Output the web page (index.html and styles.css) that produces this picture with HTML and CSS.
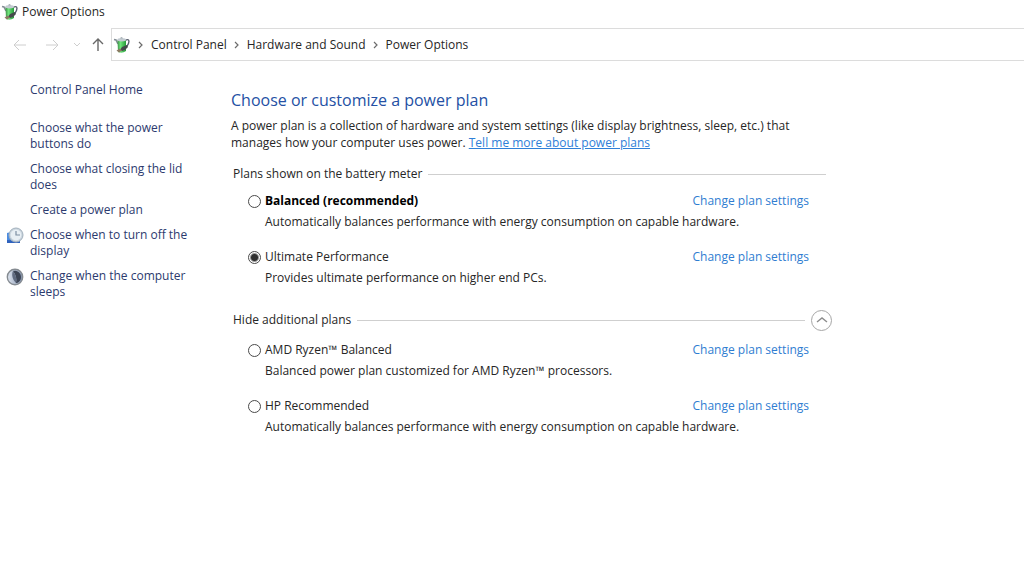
FILE: index.html
```html
<!DOCTYPE html>
<html lang="en">
<head>
<meta charset="utf-8">
<title>Power Options</title>
<link rel="stylesheet" href="styles.css">
</head>
<body>
<svg class="sprite" aria-hidden="true">
  <defs>
    <linearGradient id="green" x1="0" x2="1"><stop offset="0" stop-color="#3d8f47"/><stop offset=".35" stop-color="#6ee47a"/><stop offset="1" stop-color="#249a38"/></linearGradient>
    <linearGradient id="moon" x1="0" x2="1"><stop offset="0" stop-color="#dfe6f0"/><stop offset="1" stop-color="#8190ac"/></linearGradient>
  </defs>
  <symbol id="battery" viewBox="0 0 18 18">
    <path d="M1 3.5l2 .5 2 4" fill="none" stroke="#838d94" stroke-width="1.6"/>
    <path d="M12 4.500c4-2 4.500 0 3.500 3s-2 3-3.500 3.500" fill="none" stroke="#59606f" stroke-width="1.4"/>
    <path d="M4.500 4h8.500v11q-4 3-8 1z" fill="url(#green)"/>
    <ellipse cx="8.700" cy="3.700" rx="4.400" ry="1.700" fill="#c3cbd1"/>
    <path d="M7 2.200q1.500-1.800 3 0z" fill="#8c979d"/>
    <path d="M7 14l2-3 5-2 1 2-3 3-3 1z" fill="#444a4b"/>
    <path d="M3.500 14.500l3.500-2 2 2-3 2z" fill="#8b7a62"/>
  </symbol>
</svg>
<header>
  <div class="titlebar"><svg class="app-icon" aria-hidden="true"><use href="#battery"/></svg><span>Power Options</span></div>
  <nav class="toolbar" aria-label="Navigation">
    <div class="history">
      <button class="nav-button" aria-label="Back" disabled><svg width="14" height="12" viewBox="0 0 14 12"><path d="M13 6H1m5-5L1 6l5 5"/></svg></button>
      <button class="nav-button" aria-label="Forward" disabled><svg width="14" height="12" viewBox="0 0 14 12"><path d="M1 6h12M8 1l5 5-5 5"/></svg></button>
      <button class="nav-button recent" aria-label="Recent locations" disabled><svg width="8" height="6" viewBox="0 0 8 6"><path d="M1 1l3 3 3-3"/></svg></button>
      <button class="nav-button up" aria-label="Up"><svg width="12" height="14" viewBox="0 0 12 14"><path d="M6 13V1M1 6l5-5 5 5"/></svg></button>
    </div>
    <div class="address">
      <svg class="app-icon" aria-hidden="true"><use href="#battery"/></svg>
      <svg class="chevron" viewBox="0 0 6 8"><path d="M1 1l3 3-3 3"/></svg>
      <a href="#">Control Panel</a>
      <svg class="chevron" viewBox="0 0 6 8"><path d="M1 1l3 3-3 3"/></svg>
      <a href="#">Hardware and Sound</a>
      <svg class="chevron" viewBox="0 0 6 8"><path d="M1 1l3 3-3 3"/></svg>
      <a href="#">Power Options</a>
    </div>
  </nav>
</header>
<div class="page">
  <aside class="sidebar">
    <a class="home" href="#">Control Panel Home</a>
    <ul class="tasks">
      <li><a href="#">Choose what the power buttons do</a></li>
      <li><a href="#">Choose what closing the lid does</a></li>
      <li><a href="#">Create a power plan</a></li>
      <li>
        <svg class="task-icon" viewBox="0 0 18 18" aria-hidden="true"><path d="M1 6l4-1 9 8v3H1z" fill="#4b8be0"/><path d="M1 13l13 1v2H1z" fill="#2f62bd"/><circle cx="10" cy="8" r="7" fill="#c9d4dd" stroke="#a3b1bd"/><circle cx="10" cy="8" r="5.400" fill="#e8eff4"/><path d="M10 4v4h4" fill="none" stroke="#7d8fa2" stroke-width="1.200"/></svg>
        <a href="#">Choose when to turn off the display</a>
      </li>
      <li>
        <svg class="task-icon" viewBox="0 0 18 18" aria-hidden="true"><circle cx="9" cy="9" r="7.700" fill="url(#moon)" stroke="#858b91" stroke-width="1.400"/><path d="M7 3c4-1 8 2 8 6s-3 6-5 6c1-4 0-8-3-12z" fill="#3c4454"/><path d="M7 3c-2 4 0 9 3 12 1-4 0-8-3-12z" fill="#606b80"/></svg>
        <a href="#">Change when the computer sleeps</a>
      </li>
    </ul>
  </aside>
  <main class="content">
    <h1>Choose or customize a power plan</h1>
    <p class="intro">A power plan is a collection of hardware and system settings (like display brightness, sleep, etc.) that manages how your computer uses power. <a href="#">Tell me more about power plans</a></p>
    <section class="group">
      <div class="group-head"><h2>Plans shown on the battery meter</h2></div>
      <div class="plans">
        <div class="plan">
          <input type="radio" name="plan" id="balanced"><label class="recommended" for="balanced">Balanced (recommended)</label><a href="#">Change plan settings</a>
          <p>Automatically balances performance with energy consumption on capable hardware.</p>
        </div>
        <div class="plan">
          <input type="radio" name="plan" id="ultimate" checked><label for="ultimate">Ultimate Performance</label><a href="#">Change plan settings</a>
          <p>Provides ultimate performance on higher end PCs.</p>
        </div>
      </div>
    </section>
    <section class="group">
      <div class="group-head expandable"><h2>Hide additional plans</h2><button class="collapse" aria-label="Hide additional plans"><svg width="12" height="8" viewBox="0 0 12 8"><path d="M1 6l5-4 5 4"/></svg></button></div>
      <div class="plans additional">
        <div class="plan">
          <input type="radio" name="plan" id="ryzen"><label for="ryzen">AMD Ryzen™ Balanced</label><a href="#">Change plan settings</a>
          <p>Balanced power plan customized for AMD Ryzen™ processors.</p>
        </div>
        <div class="plan">
          <input type="radio" name="plan" id="hp"><label for="hp">HP Recommended</label><a href="#">Change plan settings</a>
          <p>Automatically balances performance with energy consumption on capable hardware.</p>
        </div>
      </div>
    </section>
  </main>
</div>
</body>
</html>
```
FILE: styles.css
```css
* { box-sizing: border-box; }
body {
  margin: 0;
  background: #fff;
  color: #262626;
  font: 12px/16px "Open Sans", "Noto Sans", sans-serif;
}
h1, h2, p, ul { margin: 0; padding: 0; }
a { text-decoration: none; }
button { padding: 0; border: 0; background: none; }
svg { flex: none; }
.sprite { position: absolute; width: 0; height: 0; }
.app-icon { width: 18px; height: 18px; }
.titlebar { display: flex; align-items: center; gap: 3px; height: 24px; padding-left: 1px; }
.toolbar { display: flex; height: 33px; margin-top: 4px; }
.history { display: flex; align-items: center; width: 111px; padding-left: 4px; }
.nav-button { display: flex; justify-content: center; width: 32px; }
.nav-button path, .chevron path, .collapse path { fill: none; stroke: #cecece; stroke-width: 1; }
.nav-button.recent { width: 18px; }
.nav-button.up { width: 24px; }
.nav-button.up path { stroke: #686868; stroke-width: 1.4; }
.address {
  display: flex;
  flex: 1;
  align-items: center;
  gap: 7px;
  padding-left: 1px;
  border: 1px solid #dcdcdc;
  border-right: 0;
}
.address a { color: #262626; }
.chevron { width: 6px; height: 8px; }
.chevron path { stroke: #6c6c6c; stroke-width: 1.2; }
.page { display: flex; padding-top: 21px; }
.sidebar { flex: none; width: 231px; padding-left: 6px; }
.sidebar a { color: #2c3a6e; }
.home { display: block; padding-left: 24px; }
.tasks { display: flex; flex-direction: column; gap: 9px; width: 190px; margin-top: 22px; list-style: none; }
.tasks li { display: grid; grid-template-columns: 18px 1fr; column-gap: 6px; }
.tasks a { grid-column: 2; }
.task-icon { width: 18px; height: 18px; }
.content { flex: 1; max-width: 601px; padding-top: 6px; }
h1 { color: #2450a4; font-size: 16px; font-weight: 400; line-height: 24px; }
.intro { max-width: 570px; margin-top: 5px; line-height: 17px; }
.intro a { color: #2f80d8; text-decoration: underline; }
.group-head { display: flex; align-items: center; gap: 6px; height: 20px; margin: 13px 6px 0 2px; }
.group-head::after { flex: 1; height: 1px; background: #cfcfcf; content: ""; }
.group-head h2 { font-size: 12px; font-weight: 400; }
.expandable { margin: 24px 0 0 2px; }
.collapse { display: flex; order: 2; align-items: center; justify-content: center; width: 21px; height: 21px; border: 1px solid #a6a6a6; border-radius: 50%; }
.collapse path { stroke: #8c8c8c; stroke-width: 1.4; }
.plans { display: flex; flex-direction: column; gap: 19px; margin-top: 9px; padding: 0 23px 0 17px; }
.additional { margin-top: 12px; }
.plan { display: grid; grid-template-columns: 13px 1fr auto; column-gap: 4px; row-gap: 5px; align-items: center; }
.plan input { appearance: none; width: 13px; height: 13px; margin: 0; border: 1px solid #4a4a4a; border-radius: 50%; background: #fff; }
.plan input:checked { background: radial-gradient(circle, #303030 0 3px, #fff 5px); }
.plan a { color: #2f7dd1; }
.plan p { grid-column: 2 / -1; }
.recommended { color: #000; font-weight: 700; }
```
